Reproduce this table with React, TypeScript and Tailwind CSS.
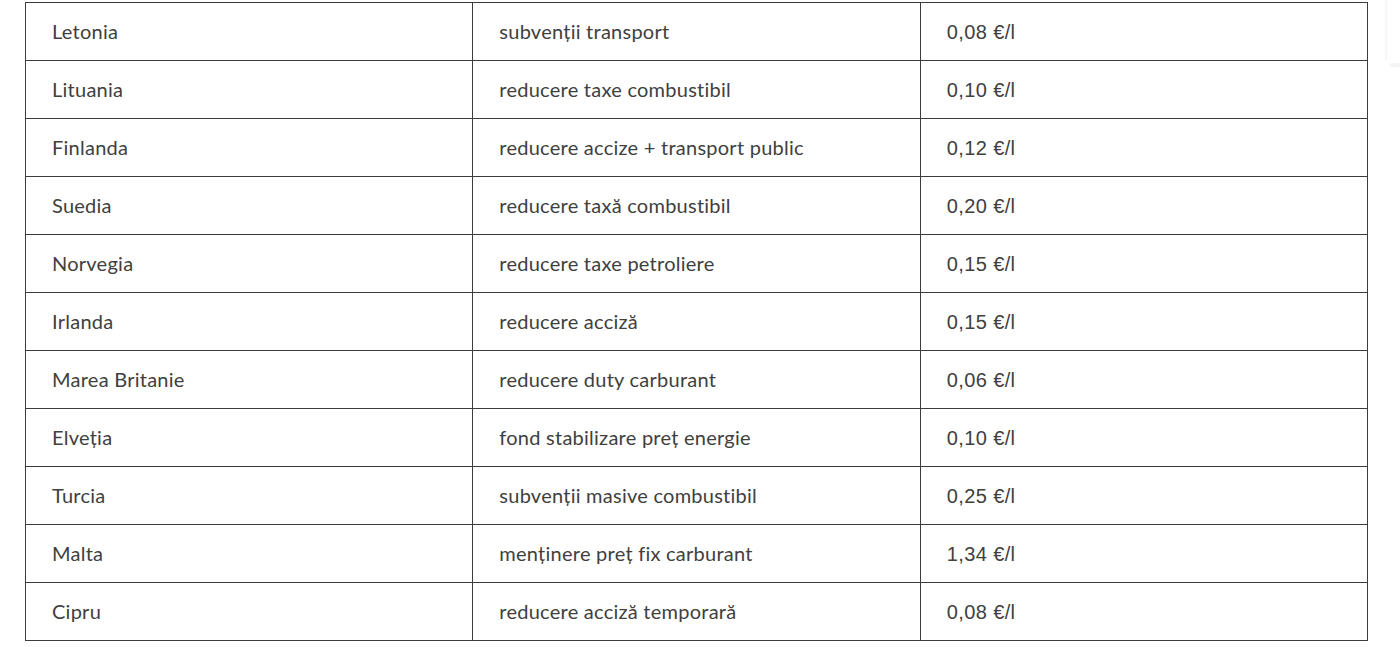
import React from "react";

const rows: [string, string, string][] = [
  ["Letonia", "subvenții transport", "0,08 €/l"],
  ["Lituania", "reducere taxe combustibil", "0,10 €/l"],
  ["Finlanda", "reducere accize + transport public", "0,12 €/l"],
  ["Suedia", "reducere taxă combustibil", "0,20 €/l"],
  ["Norvegia", "reducere taxe petroliere", "0,15 €/l"],
  ["Irlanda", "reducere acciză", "0,15 €/l"],
  ["Marea Britanie", "reducere duty carburant", "0,06 €/l"],
  ["Elveția", "fond stabilizare preț energie", "0,10 €/l"],
  ["Turcia", "subvenții masive combustibil", "0,25 €/l"],
  ["Malta", "menținere preț fix carburant", "1,34 €/l"],
  ["Cipru", "reducere acciză temporară", "0,08 €/l"],
];

export default function App() {
  return (
    <div
      className="relative w-[1400px] h-[647px] bg-white overflow-hidden pt-[2px] pl-[25px]"
      style={{ fontFamily: "Lato, 'Open Sans', sans-serif" }}
    >
      <table className="w-[1343px] border-collapse table-fixed text-[20px] tracking-[0.25px] text-[#404040]">
        <tbody>
          {rows.map((r, i) => (
            <tr key={i} className="h-[58px]">
              <td className="border border-[#3c3c3c] pl-[26px] align-middle leading-[24px] pb-[1px]">
                {r[0]}
              </td>
              <td className="border border-[#3c3c3c] pl-[26px] align-middle leading-[24px] pb-[1px]">
                {r[1]}
              </td>
              <td
                className="border border-[#3c3c3c] pl-[26px] align-middle leading-[24px] pt-[1px] font-['Liberation_Sans',Arial,sans-serif] tracking-[0.4px]"
              >
                {r[2]}
              </td>
            </tr>
          ))}
        </tbody>
      </table>
      <div className="absolute right-[13px] top-0 w-[2px] h-[60px] bg-[#f7f7f7]" />
      <div className="absolute right-0 top-[63px] w-[10px] h-[4px] bg-[#f5f5f5]" />
    </div>
  );
}
